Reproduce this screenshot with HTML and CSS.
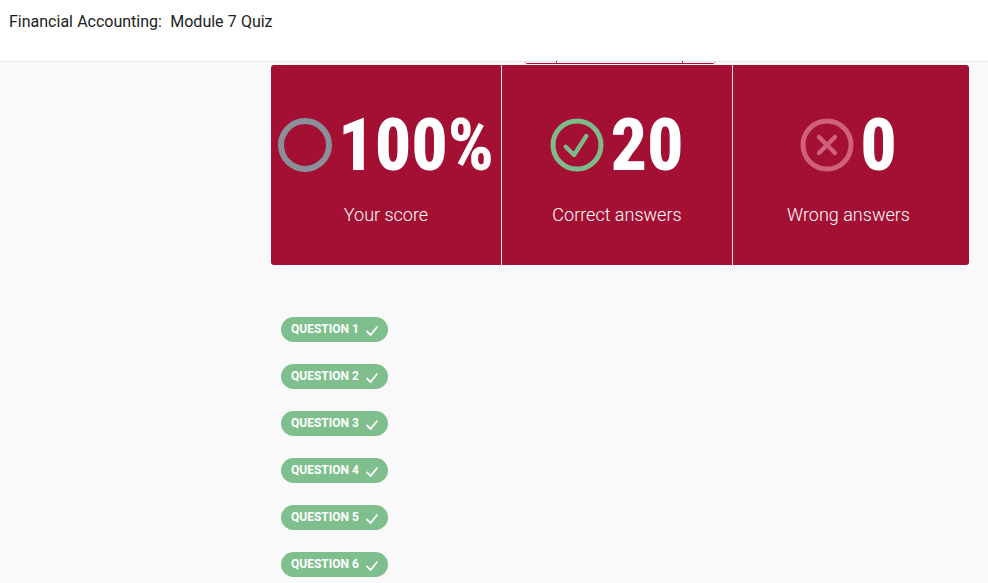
FILE: index.html
```html
<!DOCTYPE html>
<html lang="en">
<head>
<meta charset="utf-8">
<title>Financial Accounting: Module 7 Quiz</title>
<link rel="stylesheet" href="styles.css">
</head>
<body>
<header class="topbar"><h1 class="title">Financial Accounting:&nbsp; Module 7 Quiz</h1></header>
<main class="content">
  <div class="peek"><span></span><span></span><span></span></div>
  <section class="scores">
    <div class="card">
      <div class="stat">
        <svg class="icon" viewBox="0 0 54 54"><circle cx="27" cy="27" r="24" fill="none" stroke="#8b8f99" stroke-width="6"/></svg>
        <span class="num">100%</span>
      </div>
      <div class="label">Your score</div>
    </div>
    <div class="card">
      <div class="stat">
        <svg class="icon" viewBox="0 0 54 54"><circle cx="27" cy="27" r="24" fill="none" stroke="#7dbb8b" stroke-width="5"/><path d="M15.700 28.700L24 37L36.300 18" fill="none" stroke="#7dbb8b" stroke-width="4.300" stroke-linecap="round" stroke-linejoin="round"/></svg>
        <span class="num">20</span>
      </div>
      <div class="label">Correct answers</div>
    </div>
    <div class="card">
      <div class="stat">
        <svg class="icon" viewBox="0 0 54 54"><circle cx="27" cy="27" r="24" fill="none" stroke="#d1607c" stroke-width="5"/><path d="M19 19L35 35M35 19L19 35" fill="none" stroke="#d1607c" stroke-width="4.500" stroke-linecap="round"/></svg>
        <span class="num">0</span>
      </div>
      <div class="label">Wrong answers</div>
    </div>
  </section>
  <section class="questions">
    <div class="pill">QUESTION 1<svg class="tick" viewBox="0 0 12 11"><path d="M.5 6L4.500 10L11.500 1.500" fill="none" stroke="#fff" stroke-width="1.800"/></svg></div>
    <div class="pill">QUESTION 2<svg class="tick" viewBox="0 0 12 11"><path d="M.5 6L4.500 10L11.500 1.500" fill="none" stroke="#fff" stroke-width="1.800"/></svg></div>
    <div class="pill">QUESTION 3<svg class="tick" viewBox="0 0 12 11"><path d="M.5 6L4.500 10L11.500 1.500" fill="none" stroke="#fff" stroke-width="1.800"/></svg></div>
    <div class="pill">QUESTION 4<svg class="tick" viewBox="0 0 12 11"><path d="M.5 6L4.500 10L11.500 1.500" fill="none" stroke="#fff" stroke-width="1.800"/></svg></div>
    <div class="pill">QUESTION 5<svg class="tick" viewBox="0 0 12 11"><path d="M.5 6L4.500 10L11.500 1.500" fill="none" stroke="#fff" stroke-width="1.800"/></svg></div>
    <div class="pill">QUESTION 6<svg class="tick" viewBox="0 0 12 11"><path d="M.5 6L4.500 10L11.500 1.500" fill="none" stroke="#fff" stroke-width="1.800"/></svg></div>
  </section>
</main>
</body>
</html>
```
FILE: styles.css
```css
* { box-sizing: border-box; }
html, body { margin: 0; height: 100%; overflow: hidden; }
body { background: #fafafa; font-family: Roboto, sans-serif; color: #212121; }
.topbar { height: 62px; background: #fff; border-bottom: 1px solid #e8e8e8; padding: 12px 9px 0; }
.title { margin: 0; font-size: 16px; font-weight: 400; line-height: 20px; color: #212121; word-spacing: .2px; }
.content { position: relative; width: 698px; height: 521px; margin-left: 271px; padding-top: 3px; background: #f9f9f9; }
.peek { position: absolute; top: -1px; left: 254px; width: 190px; height: 3px; display: flex; border-bottom: 1px solid #a31033; border-radius: 0 0 6px 6px; }
.peek span { border-right: 1px solid #555; }
.peek span:nth-child(1) { width: 32px; }
.peek span:nth-child(2) { width: 126px; }
.peek span:nth-child(3) { border-right: 0; }
.scores { display: flex; height: 200px; background: #a31033; border-radius: 3px; }
.card { flex: 0 0 231px; display: flex; flex-direction: column; align-items: center; color: #fff; border-right: 1px solid #f3dfe4; }
.card:last-child { border-right: 0; }
.stat { display: flex; align-items: center; justify-content: center; gap: 6px; height: 60px; margin-top: 50px; }
.icon { width: 54px; height: 54px; flex: none; }
.num { font-size: 72px; font-weight: 800; line-height: 60px; font-stretch: 82%; padding-top: 1px; }
.label { margin-top: 29px; font-size: 18px; font-weight: 300; line-height: 22px; }
.questions { padding: 51px 10px 0; display: flex; flex-direction: column; align-items: flex-start; gap: 22px; }
.pill { display: flex; align-items: center; justify-content: space-between; width: 107px; height: 25px; padding: 0 10px 2px; border-radius: 13px; background: #7fbf8e; color: #fff; font-size: 12px; font-weight: 700; margin-top: 1px; margin-bottom: -1px; }
.tick { width: 12px; height: 11px; margin: 4px 0 0; }
```
